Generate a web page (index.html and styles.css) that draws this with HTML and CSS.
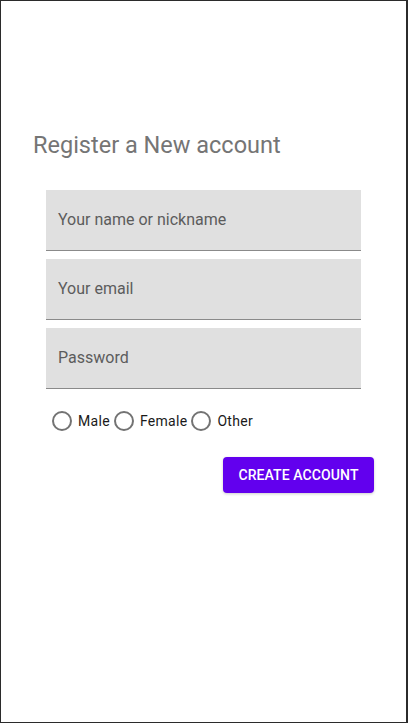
FILE: index.html
```html
<!DOCTYPE html>
<html>
<head>
<meta charset="utf-8">
<link rel="stylesheet" href="styles.css">
</head>
<body>
<div class="frame">
  <h1 class="title">Register a New account</h1>
  <form class="form">
    <div class="field"><span class="placeholder">Your name or nickname</span></div>
    <div class="field"><span class="placeholder">Your email</span></div>
    <div class="field"><span class="placeholder">Password</span></div>
    <div class="radios">
      <label class="radio"><span class="circle"></span><span class="rlabel">Male</span></label>
      <label class="radio"><span class="circle"></span><span class="rlabel">Female</span></label>
      <label class="radio"><span class="circle"></span><span class="rlabel">Other</span></label>
    </div>
    <div class="actions">
      <button type="button" class="btn">CREATE ACCOUNT</button>
    </div>
  </form>
</div>
</body>
</html>
```
FILE: styles.css
```css
html, body {
  margin: 0;
  padding: 0;
  background: #2b2b2b;
}
body {
  font-family: Roboto, "Liberation Sans", sans-serif;
}
.frame {
  box-sizing: border-box;
  width: 408px;
  height: 723px;
  background: #fff;
  border-top: 1px solid #2b2b2b;
  border-left: 1px solid #2b2b2b;
  border-right: 2px solid #2b2b2b;
  border-bottom: 1px solid #2b2b2b;
  padding-top: 130px;
}
.title {
  margin: 0 0 0 32px;
  font-size: 23.5px;
  font-weight: 400;
  color: #757575;
  line-height: 28px;
}
.form {
  margin: 31px 0 0 45px;
  width: 328px;
}
.field {
  box-sizing: border-box;
  width: 315px;
  height: 61px;
  background: #e0e0e0;
  border-bottom: 1px solid #8a8a8a;
  display: flex;
  align-items: center;
  padding-left: 12px;
  margin-bottom: 8px;
}
.placeholder {
  font-size: 16px;
  color: #5c5c5c;
  padding-bottom: 2px;
}
.radios {
  display: flex;
  align-items: center;
  margin-top: 20px;
  padding-left: 6px;
  height: 24px;
}
.radio {
  display: flex;
  align-items: center;
  margin-right: 4px;
}
.circle {
  box-sizing: border-box;
  width: 20px;
  height: 20px;
  border: 2px solid #737373;
  border-radius: 50%;
  margin-right: 6px;
}
.rlabel {
  font-size: 14px;
  color: #1a1a1a;
  letter-spacing: 0.3px;
}
.actions {
  display: flex;
  justify-content: flex-end;
  margin-top: 24px;
}
.btn {
  width: 151px;
  height: 36px;
  border: none;
  border-radius: 4px;
  background: #6200ee;
  color: #fff;
  font-family: Roboto, "Liberation Sans", sans-serif;
  font-size: 14px;
  font-weight: 500;
  letter-spacing: 0.1px;
  padding: 0;
  box-shadow: 0 1px 3px rgba(0,0,0,0.2);
}
```
